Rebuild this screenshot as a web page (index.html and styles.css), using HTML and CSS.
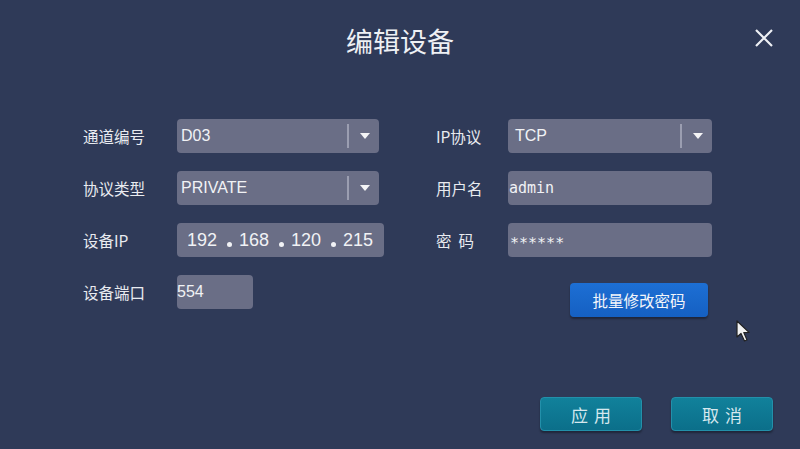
FILE: index.html
```html
<!DOCTYPE html>
<html lang="zh-CN">
<head>
	<meta charset="UTF-8">
	<title>编辑设备</title>
	<link rel="stylesheet" href="styles.css">
</head>
<body>
	<div class="dialog">
		<div class="header">
			<span></span>
			<h1 class="title">编辑设备</h1>
			<div class="close">
				<svg width="20" height="20" viewBox="0 0 20 20"><path d="M2 2 L18 18 M18 2 L2 18" stroke="#eef0f4" stroke-width="2.2" fill="none"/></svg>
			</div>
		</div>

		<div class="form">
			<div class="field">
				<label class="lbl">通道编号</label>
				<div class="box select w202"><span class="val">D03</span><i class="sep"></i><i class="arrow"></i></div>
			</div>
			<div class="field right">
				<label class="lbl">IP协议</label>
				<div class="box select w204"><span class="val pad7">TCP</span><i class="sep"></i><i class="arrow"></i></div>
			</div>

			<div class="field">
				<label class="lbl">协议类型</label>
				<div class="box select w202"><span class="val">PRIVATE</span><i class="sep"></i><i class="arrow"></i></div>
			</div>
			<div class="field right">
				<label class="lbl">用户名</label>
				<div class="box w204"><span class="mono">admin</span></div>
			</div>

			<div class="field">
				<label class="lbl">设备IP</label>
				<div class="box ip">
					<span class="oct">192</span><i class="dot"></i>
					<span class="oct">168</span><i class="dot"></i>
					<span class="oct">120</span><i class="dot"></i>
					<span class="oct">215</span>
				</div>
			</div>
			<div class="field right">
				<label class="lbl">密&nbsp;&nbsp;码</label>
				<div class="box w204"><span class="mono pw">∗∗∗∗∗∗</span></div>
			</div>

			<div class="field">
				<label class="lbl">设备端口</label>
				<div class="box port"><span class="num">554</span></div>
			</div>
			<div class="field right top">
				<button class="btn-blue">批量修改密码</button>
			</div>
		</div>

		<div class="actions">
			<button class="btn-teal">应用</button>
			<button class="btn-teal">取消</button>
		</div>

		<svg class="cursor" width="16" height="24" viewBox="0 0 16 24"><path d="M1 1 L1 17 L5 13.5 L8.5 21 L11 20 L7.8 12.6 L13 12.4 Z" fill="#f2f2f2" stroke="#222" stroke-width="1.2" stroke-linejoin="round"/></svg>
	</div>
</body>
</html>
```

FILE: styles.css
```css
*{
	margin:0px;
	padding:0px;
	box-sizing:border-box;
}
body{
	background:#2f3a58;
	font-family:"Noto Sans CJK SC","Liberation Sans",sans-serif;
	color:#eceef3;
}
.dialog{
	position:relative;
	width:800px;
	height:449px;
	background:#2f3a58;
	overflow:hidden;
}
.header{
	display:grid;
	grid-template-columns:1fr auto 1fr;
	align-items:center;
	height:80px;
}
.title{
	font-size:27px;
	font-weight:normal;
	color:#eef0f4;
}
.close{
	justify-self:end;
	margin-right:26px;
	margin-top:-5px;
	width:20px;
	height:20px;
}
.form{
	display:grid;
	grid-template-columns:301px 276px;
	grid-auto-rows:34px;
	column-gap:52px;
	row-gap:18px;
	margin-top:39px;
	padding-left:83px;
}
.field{
	display:flex;
	align-items:center;
}
.field.top{
	align-items:flex-start;
}
.lbl{
	width:94px;
	font-size:15.5px;
	color:#e9ebf0;
}
.right .lbl{
	width:72px;
}
.box{
	height:34px;
	background:#6a6e86;
	border-radius:4px;
	display:flex;
	align-items:center;
	position:relative;
	color:#f1f2f5;
}
.w202{ width:202px; }
.w204{ width:204px; }
.select .val{
	flex:1;
	padding-left:4px;
	font-family:"Liberation Sans",Arial,sans-serif;
	font-size:16px;
}
.select .val.pad7{
	padding-left:7px;
}
.sep{
	width:2px;
	height:24px;
	background:#9b9eb1;
	margin-right:11px;
}
.arrow{
	width:0;
	height:0;
	border-left:5px solid transparent;
	border-right:5px solid transparent;
	border-top:6px solid #f4f4f6;
	margin-right:9px;
}
.mono{
	font-family:"DejaVu Sans Mono",monospace;
	font-size:15px;
	padding-left:1px;
}
.mono.pw{
	padding-left:2px;
	font-size:15px;
}
.ip{
	width:207px;
	padding-left:10px;
	font-family:"Liberation Sans",Arial,sans-serif;
	font-size:18px;
}
.oct{
	width:30px;
}
.dot{
	width:5px;
	height:5px;
	border-radius:50%;
	background:#f1f2f5;
	margin:9px 7px 0px 10px;
}
.port{
	width:76px;
}
.num{
	font-family:"Liberation Sans",Arial,sans-serif;
	font-size:16px;
}
.btn-blue{
	margin-left:134px;
	margin-top:8px;
	width:138px;
	height:34px;
	border:none;
	border-radius:4px;
	background:linear-gradient(#1d6fd4,#1560c2);
	box-shadow:0px 2px 2px rgba(0,0,0,0.35);
	color:#f2f5fa;
	font-family:"Noto Sans CJK SC",sans-serif;
	font-size:15.5px;
}
.actions{
	display:flex;
	justify-content:flex-end;
	gap:29px;
	margin-top:88px;
	padding-right:27px;
}
.btn-teal{
	width:102px;
	height:34px;
	border:1px solid #2390aa;
	border-radius:4px;
	background:linear-gradient(#11819b,#0b6f8a);
	box-shadow:0px 2px 2px rgba(0,0,0,0.35);
	color:#d6e8ee;
	font-family:"Noto Sans CJK SC",sans-serif;
	font-size:17px;
	letter-spacing:6px;
	padding-left:6px;
}
.cursor{
	position:absolute;
	left:736px;
	top:320px;
}
```
